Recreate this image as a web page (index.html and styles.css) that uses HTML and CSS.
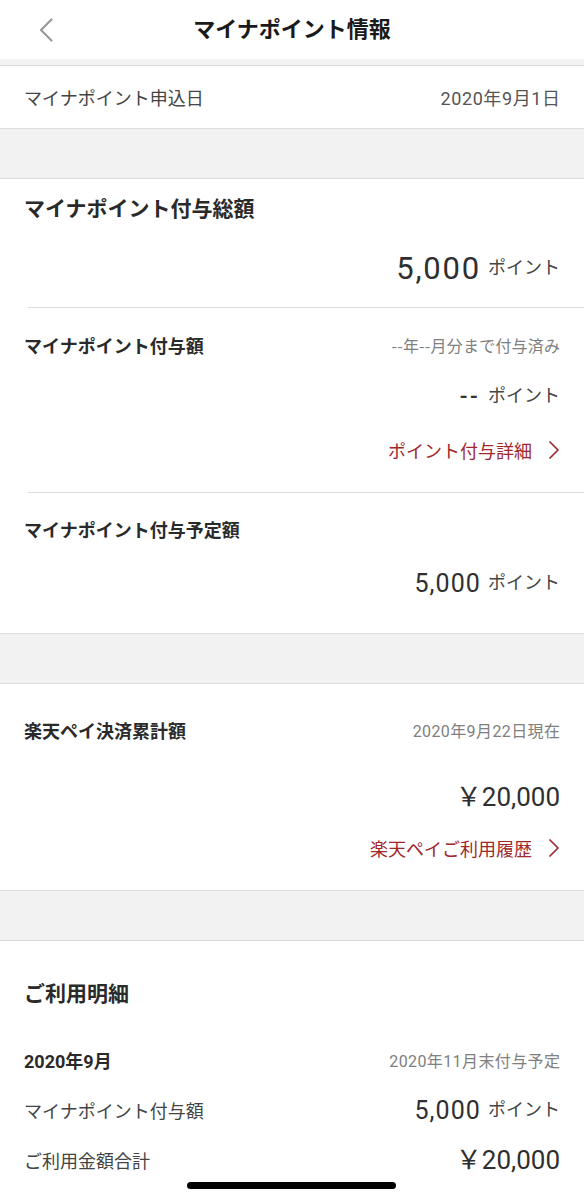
FILE: index.html
```html
<!DOCTYPE html>
<html lang="ja">
<head>
<meta charset="utf-8">
<title>マイナポイント情報</title>
<link rel="stylesheet" href="styles.css">
</head>
<body>
<header class="header">
  <div class="back">
    <svg width="14" height="24" viewBox="0 0 14 24"><path d="M12.5 1.5 L2 12 L12.5 22.5" fill="none" stroke="#9a9a9a" stroke-width="2.2" stroke-linecap="round" stroke-linejoin="round"/></svg>
  </div>
  <h1 class="title">マイナポイント情報</h1>
  <div></div>
</header>
<div class="band-thin"></div>

<div class="row-simple">
  <span class="label">マイナポイント申込日</span>
  <span class="date">2020年9月1日</span>
</div>

<div class="band"></div>

<section class="card">
  <div class="block b1">
    <div class="sec-title">マイナポイント付与総額</div>
    <div class="amount-line big gap24"><span class="num n31">5,000</span><span class="unit">ポイント</span></div>
  </div>
  <div class="divider"></div>
  <div class="block b2">
    <div class="head-line"><span class="sub-title">マイナポイント付与額</span><span class="note cjk">--年--月分まで付与済み</span></div>
    <div class="amount-line gap21"><span class="dash">--</span><span class="unit">ポイント</span></div>
    <div class="link-line gap24"><span>ポイント付与詳細</span><svg width="12" height="20" viewBox="0 0 12 20"><path d="M2 2 L10 10 L2 18" fill="none" stroke="#a0282b" stroke-width="1.7" stroke-linecap="round" stroke-linejoin="round"/></svg></div>
  </div>
  <div class="divider"></div>
  <div class="block b3">
    <div class="head-line"><span class="sub-title">マイナポイント付与予定額</span></div>
    <div class="amount-line mid gap21"><span class="num n25">5,000</span><span class="unit">ポイント</span></div>
  </div>
</section>

<div class="band"></div>

<section class="card">
  <div class="block b4">
    <div class="head-line"><span class="sub-title">楽天ペイ決済累計額</span><span class="note">2020年9月22日現在</span></div>
    <div class="amount-line big gap32"><span class="num n26">￥20,000</span></div>
    <div class="link-line gap16"><span>楽天ペイご利用履歴</span><svg width="12" height="20" viewBox="0 0 12 20"><path d="M2 2 L10 10 L2 18" fill="none" stroke="#a0282b" stroke-width="1.7" stroke-linecap="round" stroke-linejoin="round"/></svg></div>
  </div>
</section>

<div class="band"></div>

<section class="card">
  <div class="block b5">
    <div class="sec-title">ご利用明細</div>
    <div class="head-line gap36"><span class="sub-title">2020年9月</span><span class="note">2020年11月末付与予定</span></div>
    <div class="detail-line gap20"><span class="label">マイナポイント付与額</span><span class="amt"><span class="num n25">5,000</span><span class="unit">ポイント</span></span></div>
    <div class="detail-line gap20"><span class="label">ご利用金額合計</span><span class="num n26">￥20,000</span></div>
  </div>
</section>

<div class="home-indicator"></div>
</body>
</html>
```

FILE: styles.css
```css
* { box-sizing: border-box; }
html, body { margin: 0; padding: 0; }
body {
  width: 584px;
  min-height: 1200px;
  background: #fff;
  font-family: Roboto, "Noto Sans CJK JP", sans-serif;
  color: #333;
  position: relative;
}
.header {
  height: 59px;
  display: grid;
  grid-template-columns: 1fr auto 1fr;
  align-items: center;
}
.back { padding-left: 39px; display: flex; align-items: center; height: 24px; }
.back svg { display: block; }
.title {
  margin: 0;
  font-size: 22px;
  font-weight: 700;
  color: #1a1a1a;
  line-height: 30px;
}
.band-thin {
  height: 7px;
  background: #f2f2f2;
  border-bottom: 1px solid #dcdcdc;
}
.row-simple {
  height: 62px;
  padding: 0 24px;
  display: flex;
  align-items: center;
  justify-content: space-between;
  font-size: 18px;
}
.label { color: #444; font-size: 18px; }
.date { color: #555; font-size: 18px; letter-spacing: 0.6px; margin-right: -0.6px; }
.band {
  height: 51px;
  background: #f2f2f2;
  border-top: 1px solid #dcdcdc;
  border-bottom: 1px solid #dcdcdc;
}
.card { background: #fff; }
.block { padding: 0 24px; }
.b1 { padding-top: 15px; padding-bottom: 19px; }
.b2 { padding-top: 22px; padding-bottom: 27px; }
.b3 { padding-top: 21px; padding-bottom: 32px; }
.b4 { padding-top: 31px; padding-bottom: 27px; }
.b5 { padding-top: 38px; padding-bottom: 0; }
.divider { margin-left: 28px; border-top: 1px solid #dcdcdc; }

.sec-title {
  font-size: 21px;
  font-weight: 700;
  line-height: 30px;
  color: #2a2a2a;
}
.head-line {
  display: flex;
  justify-content: space-between;
  align-items: center;
  height: 30px;
}
.sub-title {
  font-size: 18px;
  font-weight: 700;
  color: #2a2a2a;
}
.note { font-size: 16px; color: #808080; letter-spacing: 0.4px; margin-right: -0.4px; }
.note.cjk { font-family: "Noto Sans CJK JP", sans-serif; letter-spacing: 0.2px; margin-right: -0.2px; }

.amount-line {
  display: flex;
  justify-content: flex-end;
  align-items: center;
  height: 30px;
}
.amount-line.big { height: 40px; }
.amount-line.mid { height: 36px; }
.num { color: #2f2f2f; font-weight: 400; line-height: 1; }
.n31 { font-size: 31px; letter-spacing: 1.8px; }
.n25 { font-size: 25px; letter-spacing: 1.1px; }
.n26 { font-size: 26px; }
.num.n31 + .unit { margin-left: 7px; }
.num.n25 + .unit { margin-left: 7px; }
.unit { font-size: 18px; color: #444; margin-left: 8px; line-height: 1; }
.dash { font-family: Roboto, sans-serif; font-size: 21px; font-weight: 700; color: #333; letter-spacing: 2px; line-height: 1; }

.link-line {
  display: flex;
  justify-content: flex-end;
  align-items: center;
  gap: 16px;
  height: 30px;
  color: #a0282b;
  font-size: 18px;
}
.link-line svg { display: block; }

.detail-line {
  display: flex;
  justify-content: space-between;
  align-items: center;
  height: 30px;
}
.amt { display: flex; align-items: center; }

.gap16 { margin-top: 16px; }
.gap20 { margin-top: 20px; }
.gap21 { margin-top: 21px; }
.gap24 { margin-top: 24px; }
.gap32 { margin-top: 32px; }
.gap36 { margin-top: 36px; }

.home-indicator {
  position: absolute;
  left: 187px;
  top: 1182px;
  width: 209px;
  height: 7px;
  border-radius: 4px;
  background: #000;
}
```
